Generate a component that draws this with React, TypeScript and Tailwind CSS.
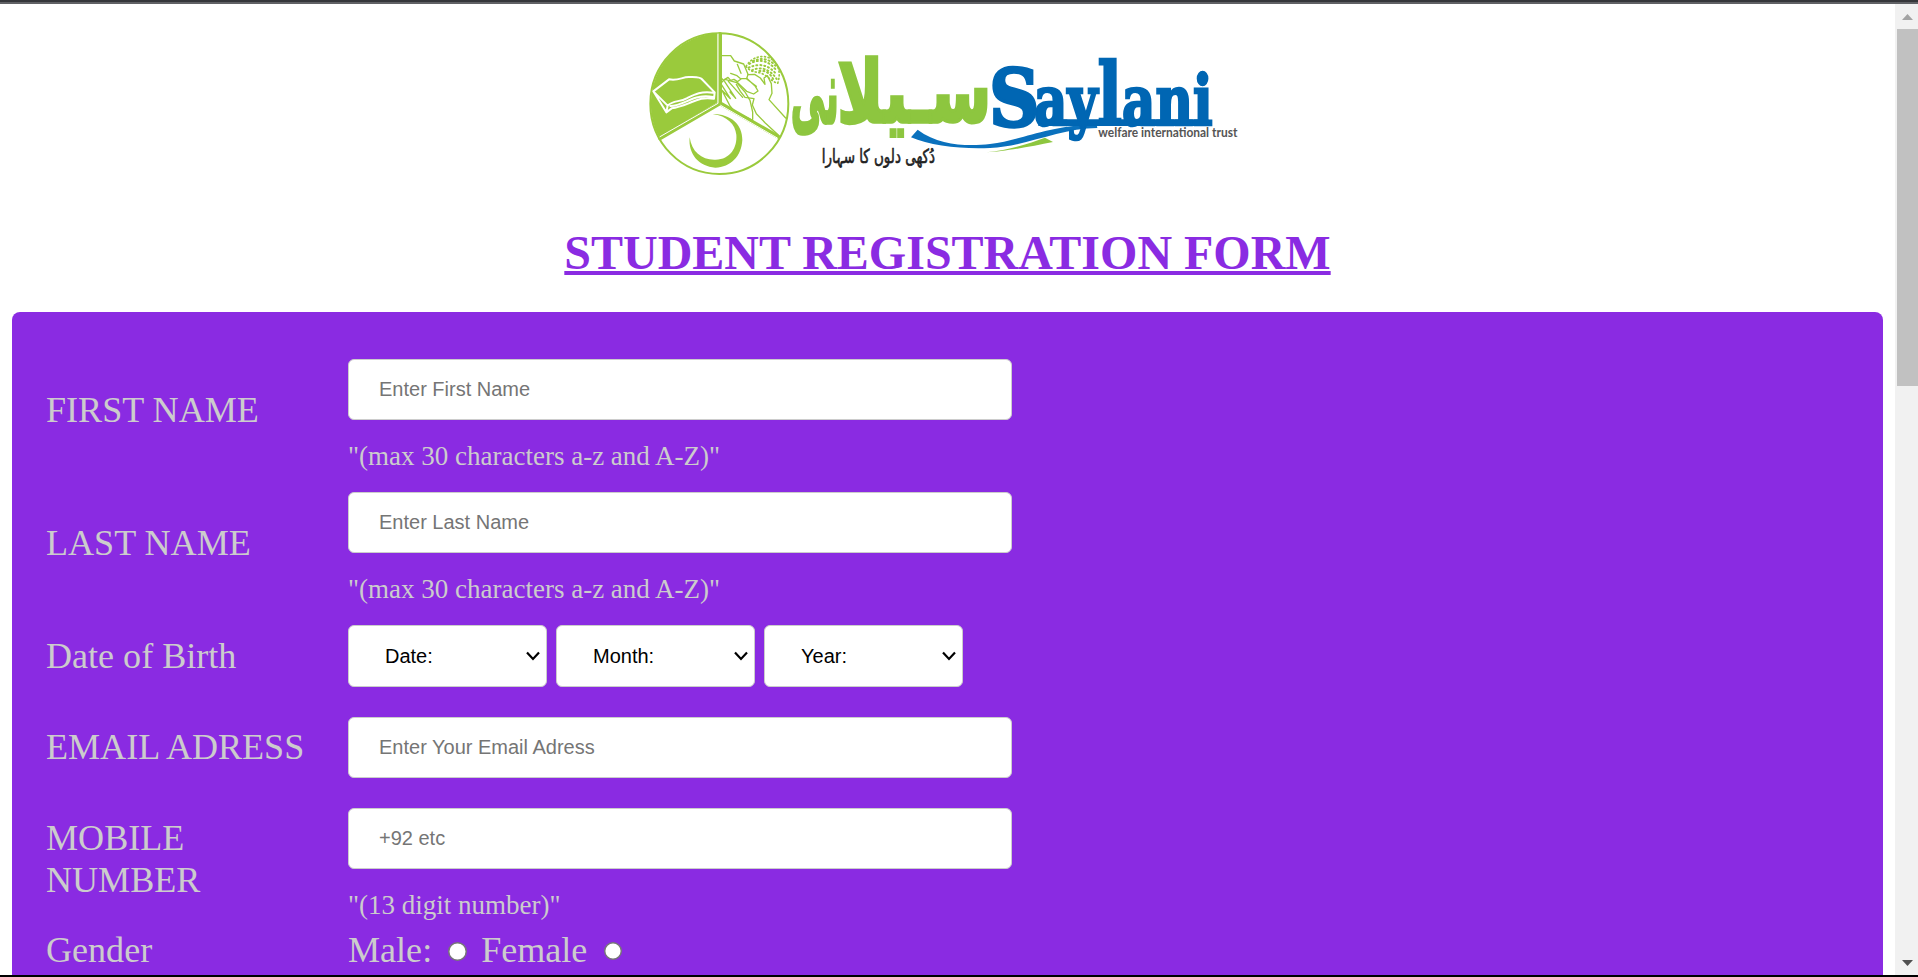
import React from "react";

const inputClass =
  "block h-[61px] w-[664px] rounded-[6px] border border-[#ccc] bg-white px-[30px] font-['Liberation_Sans',sans-serif] text-[20px] text-black outline-none placeholder:text-[#757575]";

function Logo() {
  const arabic = "'DejaVu Sans', sans-serif";
  return (
    <svg width="640" height="170" viewBox="0 0 1920 510" className="block shrink-0">
      {/* emblem */}
      <g strokeLinejoin="round" strokeLinecap="round">
        <path d="M263 40A208 212 0 0 0 87 352L263 247Z" fill="#9aca3c" />
        <ellipse cx="268" cy="251" rx="207" ry="211" fill="none" stroke="#9aca3c" strokeWidth="6" />
        <path d="M270 42V250L445 350M270 250L90 355" fill="none" stroke="#9aca3c" strokeWidth="12" />
        <path d="M264 42V250L90 350M272 256L442 354" fill="none" stroke="#fff" strokeWidth="3" />
        <path
          d="M70 214L117 178C145 184 157 170 178 171C200 170 214 171 218 180L254 217L252 236C215 231 201 240 176 250C158 257 140 263 125 265L109 277ZM70 214L113 257C129 240 149 247 170 235C194 223 211 213 250 218M113 257L109 277M121 258C150 258 181 235 206 231C223 227 236 228 249 231"
          fill="none"
          stroke="#fff"
          strokeWidth="6"
        />
        <path
          d="M248 282C303 282 338 314 337 360C334 410 302 441 256 443C207 440 174 403 179 352C185 397 217 421 257 419C301 418 322 382 319 344C316 313 291 288 248 282Z"
          fill="#9aca3c"
        />
        <g fill="none" stroke="#9aca3c" strokeWidth="4">
          <path d="M271 107H302L313 123L341 132L354 163L350 176H334L322 185L312 178L302 181L294 172L280 181L271 170M322 133L333 160M302 160L321 167L332 176" />
          <path d="M272 190L285 178L320 188L345 216L360 241L368 276V298M272 190L301 236L276 211M284 185L317 235L300 216M295 184L338 232M276 211L300 258L314 274L368 301" />
          <path d="M323 188L350 214L371 222L384 213L376 199L350 175M354 164L374 163L391 174L405 193L402 174L412 167L424 191L426 220L417 239L467 294M319 193L331 214L345 232L372 236L367 255L379 281L405 308L444 344M351 178L379 199" />
        </g>
        <path
          d="M348 139C366 111 391 106 414 112C443 124 455 154 443 190C426 185 415 170 399 162C382 153 365 161 348 139Z"
          fill="none"
          stroke="#9aca3c"
          strokeWidth="5"
          strokeDasharray="3 8"
        />
        <path
          d="M358 132C385 116 414 119 438 150M356 143C391 127 418 136 441 165M366 151C393 137 421 149 440 177M388 153C409 151 421 161 431 180M369 123C393 112 419 116 436 137"
          fill="none"
          stroke="#9aca3c"
          strokeWidth="6"
          strokeDasharray="3 9"
        />
      </g>

      {/* wordmarks */}
      <g fontFamily={arabic} fontWeight="700" fill="#8dc63f" stroke="#8dc63f" strokeWidth="10">
        <text x="622" y="307" fontSize="258" textLength="462" lengthAdjust="spacingAndGlyphs">
          سـيلا
        </text>
        <text x="482" y="310" fontSize="265" textLength="144" lengthAdjust="spacingAndGlyphs">
          نى
        </text>
      </g>
      <path
        d="M843 352L863 329C930 380 1020 378 1080 372C1170 363 1240 319 1400 312L1402 324C1290 324 1195 378 1080 384C1000 388 900 378 843 352Z"
        fill="#0a71bd"
      />
      <path d="M1070 397C1140 389 1200 370 1245 353L1269 366C1200 380 1120 395 1070 397Z" fill="#8dc63f" />
      <g fontFamily="'DejaVu Serif', serif" fontWeight="700" fill="#0066b3" stroke="#0066b3">
        <path d="M1225 298H1735V318H1225Z" stroke="none" />
        <text x="1212" y="315" fontSize="205" textLength="536" lengthAdjust="spacingAndGlyphs" strokeWidth="8">
          ay<tspan fontSize="256">l</tspan>ani
        </text>
        <text x="1078" y="317" fontSize="238" textLength="150" lengthAdjust="spacingAndGlyphs" strokeWidth="10">
          S
        </text>
      </g>
      <text
        x="1405"
        y="350"
        fontFamily="Lato, sans-serif"
        fontWeight="700"
        fontSize="37"
        textLength="417"
        lengthAdjust="spacingAndGlyphs"
        fill="#555"
      >
        welfare international trust
      </text>
      <text
        x="575"
        y="430"
        fontFamily={arabic}
        fontSize="58"
        textLength="340"
        lengthAdjust="spacingAndGlyphs"
        fill="#222"
        stroke="#222"
        strokeWidth="2"
      >
        دُکھی دلوں کا سہارا
      </text>
    </svg>
  );
}

function Row({
  label,
  height,
  lift = "pb-[2px]",
  children,
}: {
  label: string;
  height: string;
  lift?: string;
  children: React.ReactNode;
}) {
  return (
    <div className={`flex shrink-0 items-center ${height}`}>
      <div className={`w-[302px] shrink-0 pr-8 text-[36.1px] leading-[42px] ${lift}`}>{label}</div>
      <div className="flex-1 self-stretch">{children}</div>
    </div>
  );
}

function Field({ placeholder, hint }: { placeholder: string; hint?: string }) {
  return (
    <div className="flex flex-col pt-[15px]">
      <input className={inputClass} placeholder={placeholder} />
      {hint && <p className="mt-[21px] text-[27px] leading-[31px]">{hint}</p>}
    </div>
  );
}

function Picker({ label }: { label: string }) {
  return (
    <button className="flex h-[62px] w-[199px] items-center justify-between rounded-[6px] border border-[#ccc] bg-white pr-[6px] pl-[36px] font-['Liberation_Sans',sans-serif] text-[20px] text-black">
      {label}
      <svg width="14" height="10" viewBox="0 0 14 10" fill="none" stroke="#000" strokeWidth="2.2">
        <path d="M1 1.5L7 8L13 1.5" />
      </svg>
    </button>
  );
}

function Radio({ size }: { size: string }) {
  return (
    <svg viewBox="0 0 19 19" className={`block shrink-0 ${size}`}>
      <circle cx="9.5" cy="9.5" r="8.75" fill="#fff" stroke="#767676" strokeWidth="1.5" />
    </svg>
  );
}

export default function App() {
  return (
    <div className="flex h-[977px] w-full flex-col overflow-hidden bg-white font-['Liberation_Serif',serif]">
      <div className="h-[2px] shrink-0 bg-[#35363a]" />
      <div className="h-[2px] shrink-0 bg-[#606165]" />
      <div className="flex min-h-0 flex-1">
        <main className="flex min-w-0 flex-1 flex-col overflow-hidden px-[12px]">
          <header className="flex flex-col items-center">
            <div className="pt-4 pl-[5px]">
              <Logo />
            </div>
            <h1 className="mt-[35px] h-[87px] text-[48px] leading-[56px] font-bold whitespace-nowrap text-[#8a2be2] underline decoration-[4px]">
              STUDENT REGISTRATION FORM
            </h1>
          </header>
          <form className="flex flex-1 flex-col rounded-t-[8px] bg-[#8a2be2] pt-[32px] pl-[34px] text-[#ccc]">
            <Row label="FIRST NAME" height="h-[133px]">
              <Field placeholder="Enter First Name" hint={'"(max 30 characters a-z and A-Z)"'} />
            </Row>
            <Row label="LAST NAME" height="h-[133px]">
              <Field placeholder="Enter Last Name" hint={'"(max 30 characters a-z and A-Z)"'} />
            </Row>
            <Row label="Date of Birth" height="h-[92px]" lift="pb-0">
              <div className="flex gap-[9px] pt-[15px]">
                <Picker label="Date:" />
                <Picker label="Month:" />
                <Picker label="Year:" />
              </div>
            </Row>
            <Row label="EMAIL ADRESS" height="h-[91px]">
              <Field placeholder="Enter Your Email Adress" />
            </Row>
            <Row label="MOBILE NUMBER" height="h-[133px]">
              <Field placeholder="+92 etc" hint={'"(13 digit number)"'} />
            </Row>
            <Row label="Gender" height="h-[50px]">
              <div className="flex h-full items-center pb-[2px] text-[36.1px] leading-[42px]">
                <span>Male:</span>
                <span className="mt-[2px] mr-[14px] ml-[16px]">
                  <Radio size="size-[19px]" />
                </span>
                <span>Female</span>
                <span className="mt-[2px] ml-[17px]">
                  <Radio size="size-[18px]" />
                </span>
              </div>
            </Row>
          </form>
        </main>
        <div className="flex w-[23px] shrink-0 flex-col justify-between bg-[#f1f1f1]">
          <div>
            <div className="flex h-[25px] items-center justify-center pl-[2px]">
              <svg width="11" height="6" viewBox="0 0 11 6">
                <path d="M0 6L5.5 0L11 6Z" fill="#a3a3a3" />
              </svg>
            </div>
            <div className="ml-[2px] h-[357px] bg-[#c1c1c1]" />
          </div>
          <div className="flex h-[25px] items-center justify-center pl-[2px]">
            <svg width="11" height="6" viewBox="0 0 11 6">
              <path d="M0 0L5.5 6L11 0Z" fill="#505050" />
            </svg>
          </div>
        </div>
      </div>
      <div className="h-[2px] shrink-0 bg-black" />
    </div>
  );
}
